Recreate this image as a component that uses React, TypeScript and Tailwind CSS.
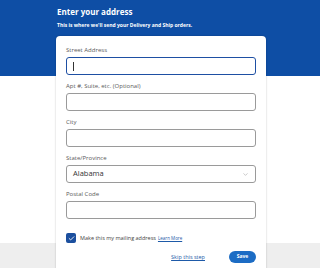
import { ChevronDown, Check } from "lucide-react";

const fields = ["Street Address", "Apt #, Suite, etc. (Optional)", "City"];

function Field({ label, focused }: { label: string; focused?: boolean }) {
  return (
    <div className="flex flex-col">
      <label className="text-[6px] leading-[8px] text-[#5a5a5a] mb-[3px]">{label}</label>
      <div
        className={
          focused
            ? "h-[18px] rounded-[3px] border border-[#1e4fa3] flex items-center pl-[6px]"
            : "h-[18px] rounded-[3px] border border-[#9a9a9a] flex items-center pl-[6px]"
        }
      >
        {focused && <span className="w-px h-[9px] bg-[#333]" />}
      </div>
    </div>
  );
}

export default function App() {
  return (
    <div className="relative h-[268px] w-[320px] overflow-hidden bg-white font-['Open_Sans',sans-serif]">
      {/* background bands */}
      <div className="absolute inset-x-0 top-0 h-[76px] bg-[#0e4ea5]" />
      <div className="absolute inset-x-0 top-[243px] bottom-0 bg-[#eeeeee]" />

      <div className="relative pl-[56px] pt-[6px]">
        <h1 className="text-white font-bold text-[8px] leading-[12px] pl-px">Enter your address</h1>
        <p className="text-white font-bold text-[5px] leading-[8px] mt-[3px] pl-px">
          This is where we'll send your Delivery and Ship orders.
        </p>

        <div className="mt-[7px] w-[210px] h-[240px] bg-white rounded-[4px] shadow-[0_0_2px_rgba(0,0,0,0.25)] px-[10px] pt-[10px] flex flex-col gap-[7px]">
          {fields.map((f, i) => (
            <Field key={f} label={f} focused={i === 0} />
          ))}

          <div className="flex flex-col">
            <label className="text-[6px] leading-[8px] text-[#5a5a5a] mb-[3px]">State/Province</label>
            <div className="h-[18px] rounded-[3px] border border-[#9a9a9a] flex items-center justify-between px-[6px]">
              <span className="text-[7.5px] text-[#333]">Alabama</span>
              <ChevronDown size={7} className="text-[#888]" strokeWidth={1.5} />
            </div>
          </div>

          <Field label="Postal Code" />

          <div className="flex items-center mt-[7px] h-[10px]">
            <span className="w-[10px] h-[10px] rounded-[2px] bg-[#1b4f9e] flex items-center justify-center">
              <Check size={7} className="text-white" strokeWidth={3} />
            </span>
            <span className="ml-[4px] text-[5.5px] text-[#444]">Make this my mailing address</span>
            <a className="ml-[2px] text-[4.5px] text-[#1e5aa8] underline">Learn More</a>
          </div>

          <div className="flex items-center justify-end gap-[24px] mt-px h-[12px]">
            <a className="text-[5.5px] text-[#1e5aa8] underline">Skip this step</a>
            <button className="w-[27px] h-[12px] rounded-full bg-[#1c6cc4] text-white text-[5px] font-bold">
              Save
            </button>
          </div>
        </div>
      </div>
    </div>
  );
}
